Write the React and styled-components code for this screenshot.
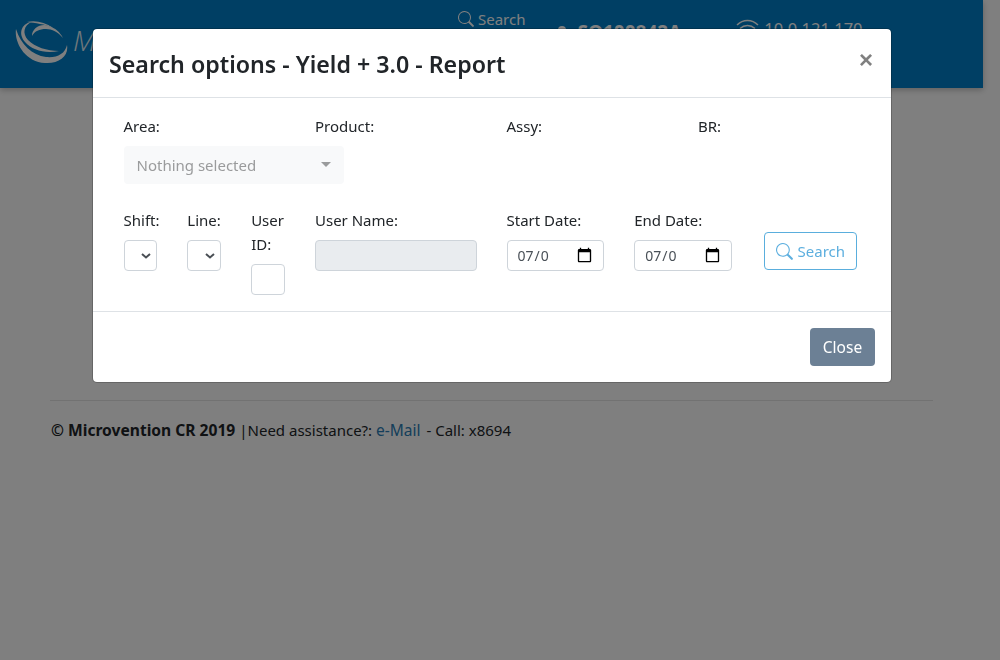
import React from "react";
import styled, { createGlobalStyle } from "styled-components";

const Global = createGlobalStyle`
  * { box-sizing: border-box; }
  html, body { margin: 0; height: 100%; }
  body {
    padding-right: 17px;
    background: #fff;
    color: #212529;
    font-family: "Noto Sans", "Open Sans", sans-serif;
    font-size: 15px;
    line-height: 24px;
    overflow: hidden;
  }
`;

const TopBar = styled.header`
  height: 88px;
  background: #007fc8;
  color: #fff;
  display: flex;
  align-items: flex-start;
  box-shadow: 0 2px 6px rgba(0, 0, 0, 0.25);
`;
const Logo = styled.div`
  margin: 20px 0 0 15px;
  width: 180px;
  display: flex;
  align-items: center;
  gap: 4px;
`;
const Brand = styled.span`
  font-family: "Open Sans", sans-serif;
  font-style: italic;
  font-weight: 300;
  font-size: 28px;
  line-height: 40px;
  margin-bottom: 4px;
  opacity: 0.9;
`;
const SearchLink = styled.div`
  margin: 7px 0 0 263px;
  display: flex;
  align-items: center;
  gap: 4px;
`;
const SerialNo = styled.div`
  margin: 20px 0 0 32px;
  font-size: 19px;
  font-weight: 700;
  display: flex;
  align-items: flex-start;
  gap: 10px;
  svg {
    margin-top: 6px;
  }
`;
const Network = styled.div`
  margin: 17px 0 0 55px;
  display: flex;
  align-items: flex-start;
  gap: 5px;
  font-size: 16.5px;
  svg {
    margin-top: 2px;
  }
`;

const Page = styled.main`
  padding: 312px 50px 0;
`;
const Rule = styled.hr`
  margin: 0 0 17px;
  border: 0;
  border-top: 1px solid rgba(0, 0, 0, 0.1);
`;
const FooterText = styled.p`
  margin: 0 0 0 1px;
`;
const FooterStrong = styled.strong`
  font-size: 15.6px;
`;
const FooterLink = styled.a`
  color: #2a7cb5;
  font-size: 15.5px;
  margin-right: 2px;
  text-decoration: none;
`;

const Backdrop = styled.div`
  position: fixed;
  inset: 0;
  background: rgba(0, 0, 0, 0.5);
  padding: 28px 108px 0 92px;
`;
const Modal = styled.section`
  width: 800px;
  background: #fff;
  background-clip: padding-box;
  border: 1px solid rgba(0, 0, 0, 0.2);
  border-radius: 5px;
`;
const ModalHead = styled.div`
  height: 69px;
  padding: 17px 16px 16px;
  border-bottom: 1px solid #dee2e6;
  display: flex;
  justify-content: space-between;
  align-items: flex-start;
`;
const Title = styled.h5`
  margin: 0;
  font-size: 23.2px;
  line-height: 36px;
  font-weight: 600;
`;
const CloseX = styled.button`
  border: 0;
  background: none;
  padding: 0;
  margin: 2px 2px 0 0;
  color: #808080;
  font: 700 24px/24px "Liberation Sans", sans-serif;
`;
const ModalBody = styled.div`
  padding: 16px 16.5px 16px 15.5px;
`;
const Row = styled.div`
  display: grid;
  grid-template-columns: repeat(12, 1fr);
  margin-bottom: ${(p) => p.$mb || 0}px;
`;
const Col = styled.div`
  grid-column: span ${(p) => p.$span};
  padding: 0 15px;
  min-width: 0;
`;
const Label = styled.label`
  display: block;
  margin-bottom: 8px;
`;
const Dropdown = styled.div`
  width: 220px;
  height: 38px;
  padding: 0 13px;
  background: #f8f9fa;
  border-radius: 4px;
  color: #9a9b9c;
  font-size: 15px;
  display: flex;
  align-items: center;
  justify-content: space-between;
`;
const Caret = styled.i`
  width: 0;
  height: 0;
  border: 5px solid transparent;
  border-top-color: #9a9b9c;
  border-bottom: 0;
  margin: -2px 0 0;
`;
const control = `
  display: block;
  width: 100%;
  height: 31px;
  border: 1px solid #ced4da;
  border-radius: 4px;
  background-color: #fff;
  color: #495057;
  font-family: inherit;
  font-size: 14px;
`;
const chevron =
  "data:image/svg+xml,%3Csvg xmlns='http://www.w3.org/2000/svg' width='10' height='6' viewBox='0 0 10 6'%3E%3Cpath d='M1 1l4 3.500L9 1' fill='none' stroke='%234a4f55' stroke-width='2'/%3E%3C/svg%3E";
const Select = styled.select`
  ${control}
  appearance: none;
  background-image: url("${chevron}");
  background-repeat: no-repeat;
  background-position: right 5px center;
`;
const TextInput = styled.input`
  ${control}
  &:disabled {
    background-color: #e9ecef;
  }
`;
const DateInput = styled.input`
  ${control}
  padding: 0 10px 0 9px;
  &::-webkit-datetime-edit {
    max-width: 32px;
    overflow: hidden;
    padding: 0;
  }
  &::-webkit-date-and-time-value {
    text-align: left;
  }
  &::-webkit-calendar-picker-indicator {
    margin-left: auto;
    width: 17px;
    height: 17px;
    padding: 0;
  }
`;
const SearchButton = styled.button`
  margin: 24px 0 0 2px;
  width: 93px;
  height: 38px;
  background: #fff;
  border: 1px solid #5aaedd;
  border-radius: 4px;
  color: #5dafdf;
  font-family: inherit;
  font-size: 15px;
  display: flex;
  align-items: center;
  justify-content: center;
  gap: 5px;
  padding: 0;
`;
const ModalFoot = styled.div`
  padding: 16px;
  border-top: 1px solid #dee2e6;
  display: flex;
  justify-content: flex-end;
`;
const CloseButton = styled.button`
  width: 65px;
  height: 38px;
  border: 0;
  border-radius: 4px;
  background: #6c8095;
  color: #fff;
  font-family: inherit;
  font-size: 15.5px;
`;

const Magnifier = ({ size = 16 }) => (
  <svg width={size} height={size} viewBox="0 0 16 16" fill="currentColor">
    <path d="M11.742 10.344a6.5 6.5 0 1 0-1.397 1.398l3.850 3.850a1 1 0 0 0 1.415-1.414l-3.868-3.834zM12 6.500a5.500 5.500 0 1 1-11 0 5.500 5.500 0 0 1 11 0z" />
  </svg>
);

const Swirl = () => (
  <svg width="54" height="44" viewBox="0 0 54 44" fill="#fff">
    <path d="M1 9C-1 22 10 42 30 43C44 44 54 36 52 25C50 34 42 38 31 37C17 35 6 25 1 9Z" />
    <path d="M16 2C6 4 3 14 10 22C17 30 30 34 44 31C32 31 20 27 13 20C7 13 9 6 16 2Z" />
    <path d="M17 16C17 8 26 3 34 6C40 8 45 12 48 18C43 12 37 9 31 9C24 9 20 11 17 16Z" />
    <path d="M12 2C20 0 30 2 38 8C30 4 20 3 12 2Z" />
  </svg>
);

const Person = () => (
  <svg width="10" height="18" viewBox="0 0 10 18" fill="currentColor">
    <circle cx="5" cy="4" r="4" />
    <path d="M0 16c0-4 2-6 5-6s5 2 5 6z" />
  </svg>
);

const Wifi = () => (
  <svg width="23" height="18" viewBox="0 0 23 18" fill="none" stroke="currentColor" strokeWidth="1.500">
    <path d="M1 6C7 0 16 0 22 6" />
    <path d="M4 9.500C8.500 5.500 14.500 5.500 19 9.500" />
    <path d="M7.500 13C10 11 13 11 15.500 13" />
  </svg>
);

export default function App() {
  return (
    <>
      <Global />
      <TopBar>
        <Logo>
          <Swirl />
          <Brand>M</Brand>
        </Logo>
        <SearchLink>
          <Magnifier />
          Search
        </SearchLink>
        <SerialNo>
          <Person />
          SO100842A
        </SerialNo>
        <Network>
          <Wifi />
          10.0.121.170
        </Network>
      </TopBar>
      <Page>
        <Rule />
        <FooterText>
          <FooterStrong>© Microvention CR 2019 </FooterStrong>|Need assistance?: <FooterLink href="#">e-Mail</FooterLink> - Call: x8694
        </FooterText>
      </Page>
      <Backdrop>
        <Modal>
          <ModalHead>
            <Title>Search options - Yield + 3.0 - Report</Title>
            <CloseX>×</CloseX>
          </ModalHead>
          <ModalBody>
            <Row $mb={24}>
              <Col $span={3}>
                <Label>Area:</Label>
                <Dropdown>
                  Nothing selected
                  <Caret />
                </Dropdown>
              </Col>
              <Col $span={3}><Label>Product:</Label></Col>
              <Col $span={3}><Label>Assy:</Label></Col>
              <Col $span={3}><Label>BR:</Label></Col>
            </Row>
            <Row>
              <Col $span={1}>
                <Label>Shift:</Label>
                <Select />
              </Col>
              <Col $span={1}>
                <Label>Line:</Label>
                <Select />
              </Col>
              <Col $span={1}>
                <Label>User ID:</Label>
                <TextInput />
              </Col>
              <Col $span={3}>
                <Label>User Name:</Label>
                <TextInput disabled />
              </Col>
              <Col $span={2}>
                <Label>Start Date:</Label>
                <DateInput type="date" defaultValue="2019-07-01" />
              </Col>
              <Col $span={2}>
                <Label>End Date:</Label>
                <DateInput type="date" defaultValue="2019-07-01" />
              </Col>
              <Col $span={2}>
                <SearchButton>
                  <Magnifier size={17} />
                  Search
                </SearchButton>
              </Col>
            </Row>
          </ModalBody>
          <ModalFoot>
            <CloseButton>Close</CloseButton>
          </ModalFoot>
        </Modal>
      </Backdrop>
    </>
  );
}
